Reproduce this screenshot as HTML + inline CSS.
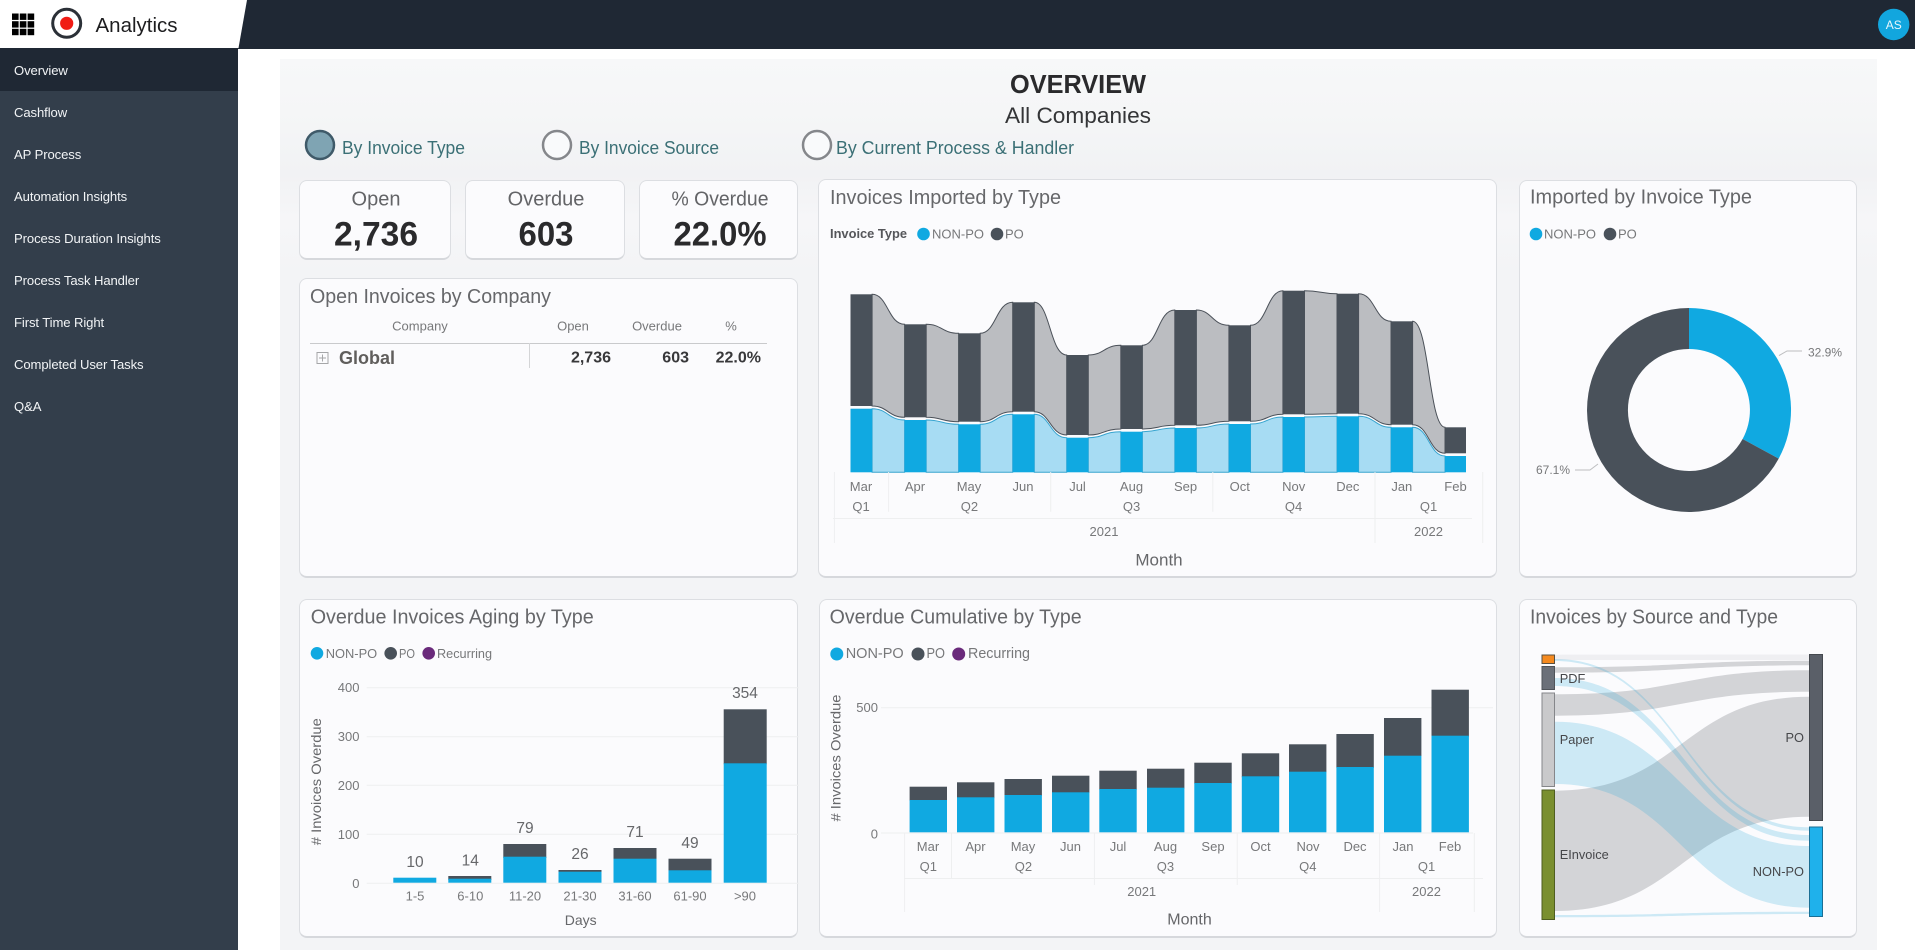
<!DOCTYPE html>
<html lang="en"><head><meta charset="utf-8"><title>Analytics</title>
<style>
html,body{margin:0;padding:0;width:1915px;height:950px;overflow:hidden;background:#fff;font-family:"Liberation Sans",sans-serif}
.top{position:absolute;left:0;top:0;width:1915px;height:49px;background:#1f2834}
.brand{position:absolute;left:0;top:0;width:248px;height:48px;background:#fff;clip-path:polygon(0 0,247px 0,238.5px 48px,0 48px)}
.side{position:absolute;left:0;top:48px;width:238px;height:902px;background:#333e4b}
.side div{height:42px;line-height:46px;overflow:hidden;padding-left:14px;color:#f2f4f6;font-size:13.1px;letter-spacing:-.1px}
.side div.on{background:#1f2834;height:43px;margin-bottom:-1px}
.panel{position:absolute;left:280px;top:59px;width:1597px;height:891px;background:linear-gradient(180deg,#f7f8f9 0,#f5f6f7 6%,#f1f2f4 13%,#f6f6f8 18%,#f3f4f6 24%,#f3f4f6 100%)}
.card{position:absolute;box-sizing:border-box;background:#fbfbfd;border:1px solid #dcdee2;border-bottom:2px solid #d6d8dc;border-radius:8px}
svg{position:absolute;left:0;top:0}
text{font-family:"Liberation Sans",sans-serif;dominant-baseline:central}
.t{font-size:20px;fill:#66676a}
.l{font-size:13px;fill:#77787a}
.c{text-anchor:middle}
.r{text-anchor:end}
.kh{font-size:20px;fill:#636467;text-anchor:middle}
.kv{font-size:34px;font-weight:bold;fill:#2a2a2c;text-anchor:middle}
.f{font-size:18px;fill:#3b7076}
.g{stroke:#eeeff0;stroke-width:1;fill:none}
.rg{fill:#bbbdc1;stroke:#4b5159;stroke-width:1}
.rb{fill:#a7dcf3;stroke:#37a4cf;stroke-width:1}
.d{fill:#49515a}
.b{fill:#10a9e1}
.lg{fill:rgba(85,88,96,.24)}
.lb{fill:rgba(40,170,220,.22)}
</style></head><body>
<div class="top"></div>
<div class="brand"></div>
<div class="side">
<div class="on">Overview</div><div>Cashflow</div><div>AP Process</div><div>Automation Insights</div><div>Process Duration Insights</div><div>Process Task Handler</div><div>First Time Right</div><div>Completed User Tasks</div><div>Q&amp;A</div>
</div>
<div class="panel"></div>
<div class="card" style="left:299px;top:180px;width:152px;height:80px"></div>
<div class="card" style="left:465px;top:180px;width:160px;height:80px"></div>
<div class="card" style="left:639px;top:180px;width:159px;height:80px"></div>
<div class="card" style="left:299px;top:278px;width:499px;height:300px"></div>
<div class="card" style="left:818px;top:179px;width:679px;height:399px"></div>
<div class="card" style="left:1519px;top:180px;width:338px;height:398px"></div>
<div class="card" style="left:299px;top:599px;width:499px;height:339px"></div>
<div class="card" style="left:819px;top:599px;width:678px;height:339px"></div>
<div class="card" style="left:1519px;top:599px;width:338px;height:339px"></div>

<svg width="1915" height="950" viewBox="0 0 1915 950" xmlns="http://www.w3.org/2000/svg">
<!-- header -->
<g fill="#000">
<rect x="12" y="13.5" width="6.6" height="6.4"/><rect x="19.8" y="13.5" width="6.6" height="6.4"/><rect x="27.6" y="13.5" width="6.6" height="6.4"/>
<rect x="12" y="21.2" width="6.6" height="6.4"/><rect x="19.8" y="21.2" width="6.6" height="6.4"/><rect x="27.6" y="21.2" width="6.6" height="6.4"/>
<rect x="12" y="28.8" width="6.6" height="6.4"/><rect x="19.8" y="28.8" width="6.6" height="6.4"/><rect x="27.6" y="28.8" width="6.6" height="6.4"/>
</g>
<circle cx="66.7" cy="23.3" r="14" fill="#fff" stroke="#2b3037" stroke-width="3"/>
<circle cx="66.7" cy="23.3" r="6.6" fill="#f01b14"/>
<text x="95.5" y="25.5" font-size="20.5" fill="#1d1d1f" textLength="82" lengthAdjust="spacingAndGlyphs">Analytics</text>
<circle cx="1893.7" cy="24.5" r="15.7" fill="#12a6de"/>
<text x="1893.7" y="25" font-size="12" fill="#eaf7fc" class="c">AS</text>

<!-- heading -->
<text x="1078" y="85" font-size="25.5" font-weight="bold" fill="#2a2a2c" class="c" textLength="136" lengthAdjust="spacingAndGlyphs">OVERVIEW</text>
<text x="1078" y="115.5" font-size="22" fill="#343537" class="c" textLength="146" lengthAdjust="spacingAndGlyphs">All Companies</text>
<circle cx="320" cy="145" r="14" fill="#7fa4b3" stroke="#3f5a69" stroke-width="2.5"/>
<text x="342" y="148" class="f" textLength="123" lengthAdjust="spacingAndGlyphs">By Invoice Type</text>
<circle cx="557" cy="145" r="14" fill="#f9fafb" stroke="#85878b" stroke-width="2.5"/>
<text x="579" y="148" class="f" textLength="140" lengthAdjust="spacingAndGlyphs">By Invoice Source</text>
<circle cx="817" cy="145" r="14" fill="#f9fafb" stroke="#85878b" stroke-width="2.5"/>
<text x="836" y="148" class="f" textLength="238" lengthAdjust="spacingAndGlyphs">By Current Process &amp; Handler</text>

<!-- KPI -->
<text x="376" y="199.5" class="kh">Open</text><text x="376" y="234.5" class="kv" textLength="84" lengthAdjust="spacingAndGlyphs">2,736</text>
<text x="546" y="199.5" class="kh">Overdue</text><text x="546" y="234.5" class="kv" textLength="55" lengthAdjust="spacingAndGlyphs">603</text>
<text x="720" y="199.5" class="kh" textLength="97" lengthAdjust="spacingAndGlyphs">% Overdue</text><text x="720" y="234.5" class="kv" textLength="93" lengthAdjust="spacingAndGlyphs">22.0%</text>

<!-- table -->
<text x="310" y="297" class="t" textLength="241" lengthAdjust="spacingAndGlyphs">Open Invoices by Company</text>
<text x="420" y="326" class="l c" font-size="12.5">Company</text>
<text x="573" y="326" class="l c">Open</text>
<text x="657" y="326" class="l c">Overdue</text>
<text x="731" y="326" class="l c">%</text>
<line x1="310" y1="343.5" x2="767" y2="343.5" stroke="#c9cacc"/>
<line x1="529.5" y1="343" x2="529.5" y2="368" stroke="#d4d5d7"/>
<rect x="317" y="352.5" width="11" height="11" fill="none" stroke="#a5a6a8"/>
<path d="M322.5 354.5v7M319 358h7" stroke="#a5a6a8" fill="none"/>
<text x="339" y="358" font-size="18" font-weight="bold" fill="#605e5c" textLength="56" lengthAdjust="spacingAndGlyphs">Global</text>
<g font-size="16" font-weight="bold" fill="#38383a" class="r">
<text x="611" y="358" class="r">2,736</text><text x="689" y="358" class="r">603</text><text x="761" y="358" class="r">22.0%</text>
</g>

<!-- ribbon chart -->
<text x="830" y="198" class="t" textLength="231" lengthAdjust="spacingAndGlyphs">Invoices Imported by Type</text>
<text x="830" y="234" font-size="12.5" font-weight="bold" fill="#55565a" textLength="77" lengthAdjust="spacingAndGlyphs">Invoice Type</text>
<circle cx="923.5" cy="234" r="6.3" class="b"/><text x="932" y="234" class="l" textLength="52" lengthAdjust="spacingAndGlyphs">NON-PO</text>
<circle cx="997" cy="234" r="6.3" class="d"/><text x="1005" y="234" class="l">PO</text>
<g class="rb">
<path d="M872.1 408.7C888 408.7 888 420 904.6 420V472.3H872.1Z"/>
<path d="M926.2 420C942 420 942 424.3 958.6 424.3V472.3H926.2Z"/>
<path d="M980.2 424.3C996 424.3 996 414.3 1012.7 414.3V472.3H980.2Z"/>
<path d="M1034.3 414.3C1050 414.3 1050 437.7 1066.7 437.7V472.3H1034.3Z"/>
<path d="M1088.3 437.7C1104 437.7 1104 431.7 1120.8 431.7V472.3H1088.3Z"/>
<path d="M1142.4 431.7C1158 431.7 1158 428 1174.8 428V472.3H1142.4Z"/>
<path d="M1196.4 428C1212 428 1212 424 1228.9 424V472.3H1196.4Z"/>
<path d="M1250.5 424C1267 424 1267 417 1282.9 417V472.3H1250.5Z"/>
<path d="M1304.5 417C1321 417 1321 416.3 1337 416.3V472.3H1304.5Z"/>
<path d="M1358.6 416.3C1375 416.3 1375 427.3 1391 427.3V472.3H1358.6Z"/>
<path d="M1412.6 427.3C1429 427.3 1429 456 1445 456V472.3H1412.6Z"/>
</g>
<g class="rg">
<path d="M872.1 294.3C888 294.3 888 324.3 904.6 324.3V417.3C888 417.3 888 406 872.1 406Z"/>
<path d="M926.2 324.3C942 324.3 942 333.3 958.6 333.3V421.7C942 421.7 942 417.3 926.2 417.3Z"/>
<path d="M980.2 333.3C996 333.3 996 302.3 1012.7 302.3V411.7C996 411.7 996 421.7 980.2 421.7Z"/>
<path d="M1034.3 302.3C1050 302.3 1050 355 1066.7 355V435C1050 435 1050 411.7 1034.3 411.7Z"/>
<path d="M1088.3 355C1104 355 1104 345.3 1120.8 345.3V429C1104 429 1104 435 1088.3 435Z"/>
<path d="M1142.4 345.3C1158 345.3 1158 310 1174.8 310V425.3C1158 425.3 1158 429 1142.4 429Z"/>
<path d="M1196.4 310C1212 310 1212 325.3 1228.9 325.3V421.3C1212 421.3 1212 425.3 1196.4 425.3Z"/>
<path d="M1250.5 325.3C1267 325.3 1267 290.7 1282.9 290.7V414.3C1267 414.3 1267 421.3 1250.5 421.3Z"/>
<path d="M1304.5 290.7C1321 290.7 1321 293.7 1337 293.7V413.7C1321 413.7 1321 414.3 1304.5 414.3Z"/>
<path d="M1358.6 293.7C1375 293.7 1375 321.3 1391 321.3V424.7C1375 424.7 1375 413.7 1358.6 413.7Z"/>
<path d="M1412.6 321.3C1429 321.3 1429 427.3 1445 427.3V453.3C1429 453.3 1429 424.7 1412.6 424.7Z"/>
</g>
<g class="d">
<rect x="850.5" y="294.3" width="21.6" height="111.7"/><rect x="904.6" y="324.3" width="21.6" height="93"/><rect x="958.6" y="333.3" width="21.6" height="88.4"/><rect x="1012.7" y="302.3" width="21.6" height="109.4"/><rect x="1066.7" y="355" width="21.6" height="80"/><rect x="1120.8" y="345.3" width="21.6" height="83.7"/><rect x="1174.8" y="310" width="21.6" height="115.3"/><rect x="1228.9" y="325.3" width="21.6" height="96"/><rect x="1282.9" y="290.7" width="21.6" height="123.6"/><rect x="1337" y="293.7" width="21.6" height="120"/><rect x="1391" y="321.3" width="21.6" height="103.4"/><rect x="1445" y="427.3" width="21" height="26"/>
</g>
<g class="b">
<rect x="850.5" y="408.7" width="21.6" height="63.6"/><rect x="904.6" y="420" width="21.6" height="52.3"/><rect x="958.6" y="424.3" width="21.6" height="48"/><rect x="1012.7" y="414.3" width="21.6" height="58"/><rect x="1066.7" y="437.7" width="21.6" height="34.6"/><rect x="1120.8" y="431.7" width="21.6" height="40.6"/><rect x="1174.8" y="428" width="21.6" height="44.3"/><rect x="1228.9" y="424" width="21.6" height="48.3"/><rect x="1282.9" y="417" width="21.6" height="55.3"/><rect x="1337" y="416.3" width="21.6" height="56"/><rect x="1391" y="427.3" width="21.6" height="45"/><rect x="1445" y="456" width="21" height="16.3"/>
</g>
<path class="g" d="M834.4 472V543M888.6 472V511.7M1050.7 472V511.7M1212.8 472V511.7M1375 472V543M1482.7 472V543M833 518.5H1472"/>
<g class="l c">
<text x="861" y="486.7" class="l c">Mar</text><text x="915" y="486.7" class="l c">Apr</text><text x="969" y="486.7" class="l c">May</text><text x="1023" y="486.7" class="l c">Jun</text><text x="1077.5" y="486.7" class="l c">Jul</text><text x="1131.5" y="486.7" class="l c">Aug</text><text x="1185.6" y="486.7" class="l c">Sep</text><text x="1239.7" y="486.7" class="l c">Oct</text><text x="1293.7" y="486.7" class="l c">Nov</text><text x="1347.8" y="486.7" class="l c">Dec</text><text x="1401.8" y="486.7" class="l c">Jan</text><text x="1455.5" y="486.7" class="l c">Feb</text>
<text x="861" y="506.7" class="l c">Q1</text><text x="969.4" y="506.7" class="l c">Q2</text><text x="1131.5" y="506.7" class="l c">Q3</text><text x="1293.6" y="506.7" class="l c">Q4</text><text x="1428.5" y="506.7" class="l c">Q1</text>
<text x="1104" y="531.7" class="l c">2021</text><text x="1428.5" y="531.7" class="l c">2022</text>
</g>
<text x="1159" y="560" font-size="17" fill="#66676a" class="c">Month</text>

<!-- donut -->
<text x="1530" y="197.5" class="t" textLength="222" lengthAdjust="spacingAndGlyphs">Imported by Invoice Type</text>
<circle cx="1536" cy="234" r="6.3" class="b"/><text x="1544" y="234" class="l" textLength="52" lengthAdjust="spacingAndGlyphs">NON-PO</text>
<circle cx="1610" cy="234" r="6.3" class="d"/><text x="1618" y="234" class="l">PO</text>
<path class="b" d="M1689 308A102 102 0 0 1 1778.7 458.6L1742.6 439A61 61 0 0 0 1689 349Z"/>
<path class="d" d="M1689 308A102 102 0 1 0 1778.7 458.6L1742.6 439A61 61 0 1 1 1689 349Z"/>
<path d="M1779 355.6L1787 351H1802M1575 470H1590L1598 464" fill="none" stroke="#bdbec0"/>
<text x="1808" y="352.6" font-size="12.2" fill="#77787a" textLength="34" lengthAdjust="spacingAndGlyphs">32.9%</text>
<text x="1536" y="470" font-size="12.2" fill="#77787a" textLength="34" lengthAdjust="spacingAndGlyphs">67.1%</text>

<!-- aging -->
<text x="310.7" y="617.5" class="t" textLength="283" lengthAdjust="spacingAndGlyphs">Overdue Invoices Aging by Type</text>
<circle cx="317" cy="653.3" r="6.3" class="b"/><text x="325.7" y="653.3" class="l" textLength="51.5" lengthAdjust="spacingAndGlyphs">NON-PO</text>
<circle cx="390.7" cy="653.3" r="6.3" class="d"/><text x="399" y="653.3" class="l" textLength="16" lengthAdjust="spacingAndGlyphs">PO</text>
<circle cx="428.7" cy="653.3" r="6.3" fill="#6a2a7b"/><text x="437" y="653.3" class="l" textLength="55" lengthAdjust="spacingAndGlyphs">Recurring</text>
<path class="g" d="M366.7 687.7H799M366.7 736.7H799M366.7 785.3H799M366.7 834.3H799M366.7 883.3H799"/>
<text x="359.5" y="687.7" class="l r">400</text><text x="359.5" y="736.7" class="l r">300</text><text x="359.5" y="785.3" class="l r">200</text><text x="359.5" y="834.3" class="l r">100</text><text x="359.5" y="883.3" class="l r">0</text>
<text transform="translate(316 781.7) rotate(-90)" x="0" y="0" class="c" font-size="14" fill="#66676a" textLength="127" lengthAdjust="spacingAndGlyphs"># Invoices Overdue</text>
<g class="d">
<rect x="448.3" y="876" width="43" height="4"/><rect x="503.3" y="844" width="43" height="14"/><rect x="558.5" y="870" width="43" height="3"/><rect x="613.5" y="848" width="43" height="12"/><rect x="668.5" y="858.7" width="43" height="13"/><rect x="723.7" y="709.3" width="43" height="55"/>
</g>
<g class="b">
<rect x="393.3" y="877.7" width="43" height="5"/><rect x="448.3" y="878.7" width="43" height="4"/><rect x="503.3" y="856.7" width="43" height="26"/><rect x="558.5" y="871.7" width="43" height="11"/><rect x="613.5" y="858.7" width="43" height="24"/><rect x="668.5" y="870.3" width="43" height="12.4"/><rect x="723.7" y="763.3" width="43" height="119.4"/>
</g>
<g font-size="15.5" fill="#66676a">
<text x="415" y="862.7" class="c">10</text><text x="470.3" y="861" class="c">14</text><text x="525" y="828.7" class="c">79</text><text x="580" y="854.7" class="c">26</text><text x="635" y="832.7" class="c">71</text><text x="690" y="843.7" class="c">49</text><text x="745" y="693.7" class="c">354</text>
</g>
<text x="415" y="896" class="l c">1-5</text><text x="470.3" y="896" class="l c">6-10</text><text x="525" y="896" class="l c">11-20</text><text x="580" y="896" class="l c">21-30</text><text x="635" y="896" class="l c">31-60</text><text x="690" y="896" class="l c">61-90</text><text x="745" y="896" class="l c">&gt;90</text>
<text x="580.7" y="920" font-size="14" fill="#66676a" class="c">Days</text>

<!-- cumulative -->
<text x="829.6" y="617.5" class="t" textLength="252" lengthAdjust="spacingAndGlyphs">Overdue Cumulative by Type</text>
<circle cx="836.8" cy="654" r="6.5" class="b"/><text x="845.7" y="654" font-size="14.5" fill="#77787a" textLength="58" lengthAdjust="spacingAndGlyphs">NON-PO</text>
<circle cx="918" cy="654" r="6.5" class="d"/><text x="926.5" y="654" font-size="14.5" fill="#77787a" textLength="18.5" lengthAdjust="spacingAndGlyphs">PO</text>
<circle cx="958.7" cy="654" r="6.5" fill="#6a2a7b"/><text x="968" y="654" font-size="14.5" fill="#77787a" textLength="62" lengthAdjust="spacingAndGlyphs">Recurring</text>
<path class="g" d="M881 707.7H1493M881 833H1473"/>
<text x="878" y="707.7" class="l r">500</text><text x="878" y="834" class="l r">0</text>
<text transform="translate(835.4 758) rotate(-90)" x="0" y="0" class="c" font-size="14" fill="#66676a" textLength="127" lengthAdjust="spacingAndGlyphs"># Invoices Overdue</text>
<g class="d">
<rect x="909.6" y="786.7" width="37.4" height="14"/><rect x="957" y="782.3" width="37.4" height="16"/><rect x="1004.5" y="779" width="37.4" height="17"/><rect x="1052" y="775.7" width="37.4" height="17"/><rect x="1099.3" y="770.7" width="37.4" height="19"/><rect x="1147" y="768.7" width="37.4" height="20"/><rect x="1194.3" y="762.7" width="37.4" height="21"/><rect x="1241.8" y="753.3" width="37.4" height="24"/><rect x="1289" y="744.3" width="37.4" height="28"/><rect x="1336.4" y="734" width="37.4" height="34"/><rect x="1384" y="718" width="37.4" height="38"/><rect x="1431.5" y="689.7" width="37.4" height="47"/>
</g>
<g class="b">
<rect x="909.6" y="800" width="37.4" height="32.3"/><rect x="957" y="797.3" width="37.4" height="35"/><rect x="1004.5" y="795" width="37.4" height="37.3"/><rect x="1052" y="792.3" width="37.4" height="40"/><rect x="1099.3" y="789" width="37.4" height="43.3"/><rect x="1147" y="787.7" width="37.4" height="44.6"/><rect x="1194.3" y="783" width="37.4" height="49.3"/><rect x="1241.8" y="776.3" width="37.4" height="56"/><rect x="1289" y="771.7" width="37.4" height="60.6"/><rect x="1336.4" y="767" width="37.4" height="65.3"/><rect x="1384" y="755.7" width="37.4" height="76.6"/><rect x="1431.5" y="735.7" width="37.4" height="96.6"/>
</g>
<path class="g" d="M904.6 833V912M951.5 833V878M1094.4 833V885M1237.2 833V885M1379.6 833V912M1474.3 833V912M904 878.5H1483"/>
<text x="928" y="846.7" class="l c">Mar</text><text x="975.5" y="846.7" class="l c">Apr</text><text x="1023" y="846.7" class="l c">May</text><text x="1070.5" y="846.7" class="l c">Jun</text><text x="1118" y="846.7" class="l c">Jul</text><text x="1165.5" y="846.7" class="l c">Aug</text><text x="1213" y="846.7" class="l c">Sep</text><text x="1260.5" y="846.7" class="l c">Oct</text><text x="1308" y="846.7" class="l c">Nov</text><text x="1355" y="846.7" class="l c">Dec</text><text x="1403" y="846.7" class="l c">Jan</text><text x="1450" y="846.7" class="l c">Feb</text>
<text x="928.3" y="866.7" class="l c">Q1</text><text x="1023.4" y="866.7" class="l c">Q2</text><text x="1165.4" y="866.7" class="l c">Q3</text><text x="1307.8" y="866.7" class="l c">Q4</text><text x="1426.5" y="866.7" class="l c">Q1</text>
<text x="1141.7" y="891.7" class="l c">2021</text><text x="1426.5" y="891.7" class="l c">2022</text>
<text x="1189.5" y="920" font-size="16" fill="#66676a" class="c">Month</text>

<!-- sankey -->
<text x="1530" y="617.5" class="t" textLength="248" lengthAdjust="spacingAndGlyphs">Invoices by Source and Type</text>
<path class="lg" style="opacity:.3" d="M1554.7 654.7C1682 654.7 1682 654.5 1809.3 654.5V660C1682 660 1682 660 1554.7 660Z"/>
<path class="lg" d="M1554.7 667.3C1682 667.3 1682 660.7 1809.3 660.7V665.3C1682 665.3 1682 672.7 1554.7 672.7Z"/>
<path class="lg" d="M1554.7 694.3C1682 694.3 1682 670.3 1809.3 670.3V691.7C1682 691.7 1682 715.7 1554.7 715.7Z"/>
<path class="lg" d="M1554.7 790.7C1682 790.7 1682 696.7 1809.3 696.7V816.7C1682 816.7 1682 911 1554.7 911Z"/>
<path class="lb" d="M1554.7 659C1682 659 1682 827.3 1809.3 827.3V830.7C1682 830.7 1682 661 1554.7 661Z"/>
<path class="lb" d="M1554.7 678C1682 678 1682 835 1809.3 835V840.7C1682 840.7 1682 686 1554.7 686Z"/>
<path class="lb" d="M1554.7 721.7C1682 721.7 1682 846 1809.3 846V907.7C1682 907.7 1682 784 1554.7 784Z"/>
<path class="lb" d="M1554.7 915C1682 915 1682 911.7 1809.3 911.7V914C1682 914 1682 917.3 1554.7 917.3Z"/>
<rect x="1542" y="655" width="12.5" height="8.5" fill="#f58a1f" stroke="#5a5040"/>
<rect x="1542" y="666.5" width="12.5" height="23" fill="#6b7079" stroke="#4f5359"/>
<rect x="1542" y="693" width="12.5" height="93.5" fill="#c9c9cb" stroke="#85868a"/>
<rect x="1542" y="790" width="12.5" height="129.5" fill="#7a8f2f" stroke="#4f5e1f"/>
<rect x="1809.5" y="654.5" width="13" height="166" fill="#5a5f68" stroke="#45494f"/>
<rect x="1809.5" y="827" width="13" height="89.5" fill="#1fb1eb" stroke="#1a6f95"/>
<g font-size="12.8" fill="#46474a">
<text x="1559.7" y="678.3">PDF</text><text x="1559.7" y="739.7">Paper</text><text x="1559.7" y="854.3">EInvoice</text>
<text x="1804" y="737.7" class="r">PO</text><text x="1804" y="871.7" class="r">NON-PO</text>
</g>
</svg>
</body></html>
